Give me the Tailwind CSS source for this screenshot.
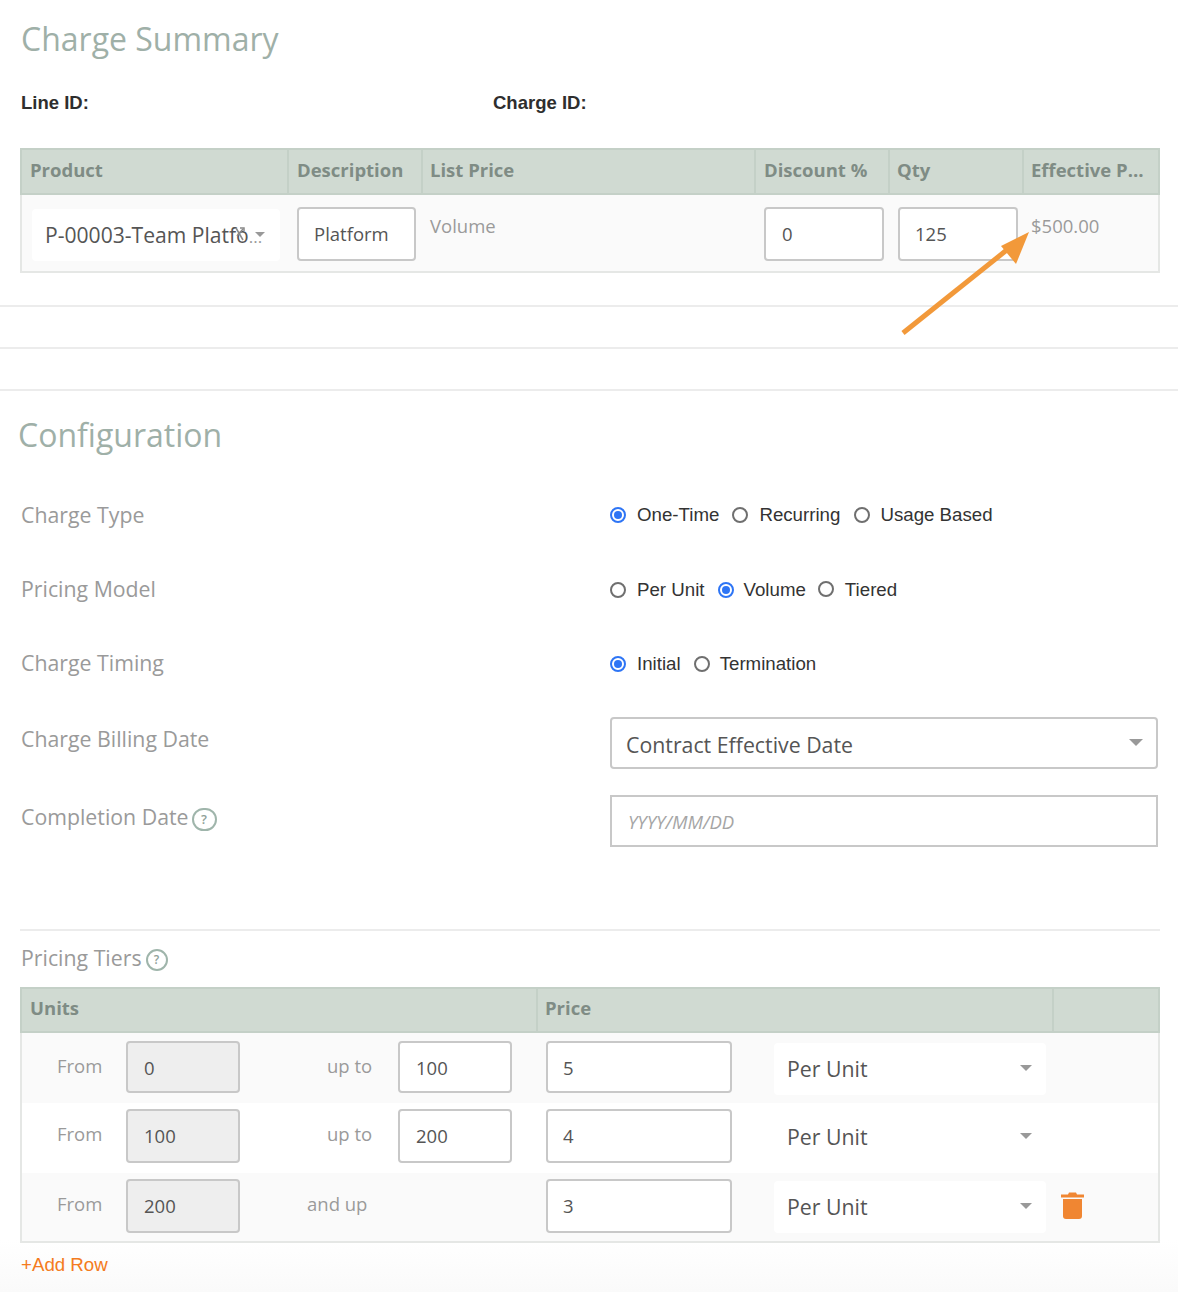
<!DOCTYPE html>
<html>
<head>
<meta charset="utf-8">
<script src="https://cdn.jsdelivr.net/npm/@tailwindcss/browser@4"></script>
</head>
<body class="bg-white">
<div class="relative w-[1178px] h-[1292px] overflow-hidden font-['Open_Sans',sans-serif] bg-gradient-to-b from-white from-[96%] to-[#fafafa]">

  <section class="h-[307px] border-b-2 border-[#ececec] px-5">
    <h1 class="pt-[17px] pl-px text-[32px] leading-[44px] text-[#9fb0a8]">Charge Summary</h1>
    <div class="flex mt-[30px] pl-px font-['Liberation_Sans',sans-serif] font-bold text-[18.5px] leading-[24px] text-[#2e2e2e]">
      <div class="w-[472px]">Line ID:</div>
      <div>Charge ID:</div>
    </div>
    <div class="mt-[33px] w-[1140px] h-[125px] border-2 border-[#e5e7e5] border-t-0 bg-[#fafafa]">
      <div class="-mx-0.5 grid grid-cols-[267px_134px_333px_134px_134px_138px] h-[47px] bg-[#d0dad2] border-2 border-[#c4d0c7] text-[18.5px] font-bold leading-[40px] text-[#7f8c85]">
        <div class="pl-2 border-r-2 border-[#c4d0c7]">Product</div>
        <div class="pl-[8px] border-r-2 border-[#c4d0c7]">Description</div>
        <div class="pl-[7px] border-r-2 border-[#c4d0c7]">List Price</div>
        <div class="pl-2 border-r-2 border-[#c4d0c7]">Discount %</div>
        <div class="pl-[7px] border-r-2 border-[#c4d0c7]">Qty</div>
        <div class="pl-[7px] truncate pr-3">Effective Price</div>
      </div>
      <div class="relative flex items-start text-[18.5px]">
        <div class="relative mt-[14px] ml-[10px] w-[248px] h-[52px] bg-white rounded pl-[13px] text-[21.1px] leading-[52px] text-[#555] whitespace-nowrap">P-00003-Team Platfo<span class="text-[17px] text-[#999]">...</span>
          <div class="absolute right-[15px] top-[23px] w-0 h-0 border-x-[5px] border-x-transparent border-t-[5px] border-t-[#999]"></div>
          <svg class="absolute left-[201px] top-[17px]" width="14" height="16" viewBox="0 0 14 16" fill="none" stroke="#888" stroke-width="1.5"><path d="M3 2 L10 14 M10 3 L4 10"/><path d="M7 2h4v3"/></svg>
        </div>
        <div class="mt-[12px] ml-[17px] w-[119px] h-[54px] bg-white border-2 border-[#c8c8c8] rounded pl-[15px] leading-[50px] text-[#555]">Platform</div>
        <div class="ml-[14px] w-[334px] mt-[18px] leading-[26px] text-[#9a9a9a]">Volume</div>
        <div class="mt-[12px] w-[120px] h-[54px] bg-white border-2 border-[#c8c8c8] rounded pl-4 leading-[50px] text-[#555]">0</div>
        <div class="mt-[12px] ml-[14px] w-[120px] h-[54px] bg-white border-2 border-[#c8c8c8] rounded pl-[15px] leading-[50px] text-[#555]">125</div>
        <div class="ml-[13px] mt-[18px] leading-[26px] text-[#9a9a9a]">$500.00</div>
      </div>
    </div>
  </section>

  <div class="h-[42px] border-b-2 border-[#ececec]"></div>
  <div class="h-[42px] border-b-2 border-[#ececec]"></div>

  <section class="px-5">
    <h2 class="pt-[22px] -ml-0.5 text-[32px] leading-[44px] text-[#9fb0a8]">Configuration</h2>

    <div class="mt-[38px] flex h-[40px] text-[21.3px] text-[#9a9a9a]">
      <div class="w-[590px] pl-px leading-[40px]">Charge Type</div>
      <div class="flex items-center font-['Liberation_Sans',sans-serif] text-[18.7px] text-[#333]">
        <span class="w-4 h-4 rounded-full bg-white border-2 border-[#2e75f5] p-[2px] mr-[11px]"><span class="block w-full h-full rounded-full bg-[#2e75f5]"></span></span><span class="mr-[13px]">One-Time</span>
        <span class="w-4 h-4 rounded-full border-2 border-[#6f6f6f] mr-[11px]"></span><span class="mr-[14px]">Recurring</span>
        <span class="w-4 h-4 rounded-full border-2 border-[#6f6f6f] mr-[10px]"></span><span>Usage Based</span>
      </div>
    </div>

    <div class="mt-[35px] flex h-[40px] text-[21.3px] text-[#9a9a9a]">
      <div class="w-[590px] pl-px leading-[38px]">Pricing Model</div>
      <div class="flex items-center font-['Liberation_Sans',sans-serif] text-[18.7px] text-[#333]">
        <span class="w-4 h-4 rounded-full border-2 border-[#6f6f6f] mr-[11px]"></span><span class="mr-[13px]">Per Unit</span>
        <span class="w-4 h-4 rounded-full bg-white border-2 border-[#2e75f5] p-[2px] mr-[10px]"><span class="block w-full h-full rounded-full bg-[#2e75f5]"></span></span><span class="mr-[12px]">Volume</span>
        <span class="w-4 h-4 rounded-full border-2 border-[#6f6f6f] mr-[11px] -translate-y-px"></span><span>Tiered</span>
      </div>
    </div>

    <div class="mt-[34px] flex h-[40px] text-[21.3px] text-[#9a9a9a]">
      <div class="w-[590px] pl-px leading-[38px]">Charge Timing</div>
      <div class="flex items-center font-['Liberation_Sans',sans-serif] text-[18.7px] text-[#333]">
        <span class="w-4 h-4 rounded-full bg-white border-2 border-[#2e75f5] p-[2px] mr-[11px]"><span class="block w-full h-full rounded-full bg-[#2e75f5]"></span></span><span class="mr-[13px]">Initial</span>
        <span class="w-4 h-4 rounded-full border-2 border-[#6f6f6f] mr-[10px]"></span><span>Termination</span>
      </div>
    </div>

    <div class="mt-[33px] flex h-[52px] text-[21.3px] text-[#9a9a9a]">
      <div class="w-[590px] pl-px pt-2 leading-[28px]">Charge Billing Date</div>
      <div class="relative h-[52px] w-[548px] bg-white border-2 border-[#c8c8c8] rounded pl-[14px] text-[21.3px] leading-[52px] text-[#555]">
        Contract Effective Date
        <div class="absolute right-[13px] top-[20px] w-0 h-0 border-x-[7px] border-x-transparent border-t-[7px] border-t-[#999]"></div>
      </div>
    </div>

    <div class="mt-[26px] flex h-[52px] text-[21.3px] text-[#9a9a9a]">
      <div class="w-[590px] pl-px pt-2 leading-[28px] flex items-start">Completion Date
        <span class="ml-[3px] mt-[5px] w-[25px] h-[23px] rounded-full border-2 border-[#9fb5ab] flex items-center justify-center text-[13px] font-semibold leading-none text-[#8f9f98]">?</span>
      </div>
      <div class="h-[52px] w-[548px] bg-white border-2 border-[#c8c8c8] pl-4 text-[18.5px] leading-[50px] italic text-[#a5a5a5]">YYYY/MM/DD</div>
    </div>

    <div class="mt-[82px] w-[1140px] h-[2px] bg-[#ececec]"></div>
    <div class="mt-[13px] pl-px flex items-center h-[28px] text-[21.3px] text-[#9a9a9a]">Pricing Tiers
      <span class="ml-[4px] mt-[3px] w-[22px] h-[22px] rounded-full border-2 border-[#9fb5ab] flex items-center justify-center text-[12px] font-semibold leading-none text-[#8f9f98]">?</span>
    </div>

    <div class="mt-[15px] w-[1140px] h-[256px] border-2 border-[#e5e7e5] border-t-0">
      <div class="-mx-0.5 grid grid-cols-[516px_516px_1fr] h-[46px] bg-[#d0dad2] border-2 border-[#c4d0c7] text-[18.5px] font-bold leading-[38px] text-[#7f8c85]">
        <div class="pl-2 border-r-2 border-[#c4d0c7]">Units</div>
        <div class="pl-[7px] border-r-2 border-[#c4d0c7]">Price</div>
        <div></div>
      </div>

      <div class="flex items-start h-[70px] bg-[#fafafa] text-[18.5px]">
        <div class="ml-[35px] w-[69px] mt-[20px] leading-[26px] text-[#9a9a9a]">From</div>
        <div class="mt-2 w-[114px] h-[52px] bg-[#eeeeee] border-2 border-[#c8c8c8] rounded pl-4 leading-[50px] text-[#555]">0</div>
        <div class="w-[158px] pl-[87px] mt-[20px] leading-[26px] text-[#9a9a9a]">up to</div>
        <div class="mt-2 w-[114px] h-[52px] bg-white border-2 border-[#c8c8c8] rounded pl-4 leading-[50px] text-[#555]">100</div>
        <div class="mt-2 ml-[34px] w-[186px] h-[52px] bg-white border-2 border-[#c8c8c8] rounded pl-[15px] leading-[50px] text-[#555]">5</div>
        <div class="relative mt-[10px] ml-[42px] w-[272px] h-[52px] bg-white rounded pl-[13px] text-[21.3px] leading-[52px] text-[#555]">Per Unit
          <div class="absolute right-[14px] top-[22px] w-0 h-0 border-x-[6px] border-x-transparent border-t-[6px] border-t-[#999]"></div>
        </div>
      </div>

      <div class="flex items-start h-[70px] bg-white text-[18.5px]">
        <div class="ml-[35px] w-[69px] mt-[18px] leading-[26px] text-[#9a9a9a]">From</div>
        <div class="mt-[6px] w-[114px] h-[54px] bg-[#eeeeee] border-2 border-[#c8c8c8] rounded pl-4 leading-[50px] text-[#555]">100</div>
        <div class="w-[158px] pl-[87px] mt-[18px] leading-[26px] text-[#9a9a9a]">up to</div>
        <div class="mt-[6px] w-[114px] h-[54px] bg-white border-2 border-[#c8c8c8] rounded pl-4 leading-[50px] text-[#555]">200</div>
        <div class="mt-[6px] ml-[34px] w-[186px] h-[54px] bg-white border-2 border-[#c8c8c8] rounded pl-[15px] leading-[50px] text-[#555]">4</div>
        <div class="relative mt-2 ml-[42px] w-[272px] h-[52px] bg-white rounded pl-[13px] text-[21.3px] leading-[52px] text-[#555]">Per Unit
          <div class="absolute right-[14px] top-[22px] w-0 h-0 border-x-[6px] border-x-transparent border-t-[6px] border-t-[#999]"></div>
        </div>
      </div>

      <div class="flex items-start h-[68px] bg-[#fafafa] text-[18.5px]">
        <div class="ml-[35px] w-[69px] mt-[18px] leading-[26px] text-[#9a9a9a]">From</div>
        <div class="mt-[6px] w-[114px] h-[54px] bg-[#eeeeee] border-2 border-[#c8c8c8] rounded pl-4 leading-[50px] text-[#555]">200</div>
        <div class="w-[158px] pl-[67px] mt-[18px] leading-[26px] text-[#9a9a9a]">and up</div>
        <div class="mt-[6px] w-[114px] h-[54px]"></div>
        <div class="mt-[6px] ml-[34px] w-[186px] h-[54px] bg-white border-2 border-[#c8c8c8] rounded pl-[15px] leading-[50px] text-[#555]">3</div>
        <div class="relative mt-2 ml-[42px] w-[272px] h-[52px] bg-white rounded pl-[13px] text-[21.3px] leading-[52px] text-[#555]">Per Unit
          <div class="absolute right-[14px] top-[22px] w-0 h-0 border-x-[6px] border-x-transparent border-t-[6px] border-t-[#999]"></div>
        </div>
        <svg class="mt-[18px] ml-[15px]" width="23" height="28" viewBox="0 0 23 28"><path fill="#f08632" d="M0 3.5h7L8 1.5h7l1 2H23V6.5H0z"/><path fill="#f08632" d="M2 8h19v17a3 3 0 0 1-3 3H5a3 3 0 0 1-3-3z"/></svg>
      </div>
    </div>

    <div class="mt-[9px] pl-px font-['Liberation_Sans',sans-serif] text-[18.7px] leading-[26px] text-[#f47b20]">+Add Row</div>
  </section>

  <svg class="absolute left-[895px] top-[225px]" width="145" height="115" viewBox="0 0 145 115" fill="none">
    <path d="M8 108 L118 20" stroke="#f2993a" stroke-width="5"/>
    <path fill="#f2993a" d="M134 7 L106 21 L121 39 Z"/>
  </svg>
</div>
</body>
</html>
